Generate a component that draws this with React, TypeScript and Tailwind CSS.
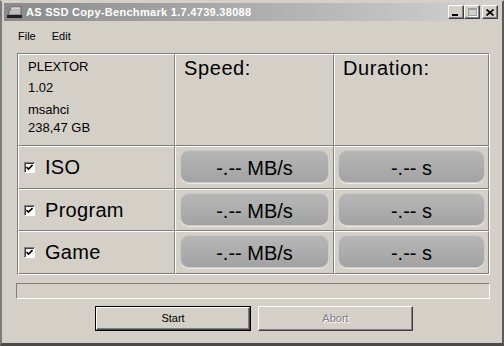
import React from 'react';

const ROWS = ['ISO', 'Program', 'Game'];

const Pill: React.FC<{ text: string }> = ({ text }) => (
    <div className="h-[33px] rounded-[9px] border border-[#c9c9c9] shadow-[0_1px_0_#ececec] bg-gradient-to-b from-[#b6b6b6] via-[#adadad] to-[#a2a2a2] flex items-center justify-center pt-[3px] text-[20px] leading-[23px] text-black">
        {text}
    </div>
);

const CheckBox: React.FC = () => (
    <div className="w-[11px] h-[11px] bg-white border-t border-l border-[#808080] border-r border-b border-r-white border-b-white shadow-[inset_1px_1px_0_#404040] flex items-center justify-center">
        <svg width="7" height="7" viewBox="0 0 7 7">
            <path d="M0.5 3 L2.5 5 L6.5 1" stroke="#000" strokeWidth="1.6" fill="none" />
        </svg>
    </div>
);

const TitleButton: React.FC<{ children: React.ReactNode; className?: string }> = ({ children, className }) => (
    <div className={`w-[16px] h-[14px] bg-[#d4d0c8] border border-t-white border-l-white border-r-[#404040] border-b-[#404040] shadow-[inset_-1px_-1px_0_#808080] flex items-center justify-center ${className ?? ''}`}>
        {children}
    </div>
);

export default function App() {
    return (
        <div
            className="w-[504px] h-[346px] bg-[#d4d0c8] border-l-2 border-t-2 border-r-2 border-b-[3px] border-l-[#7a7a7a] border-t-[#d4d0c8] border-r-[#5a5a5a] border-b-[#4a4a4a] flex flex-col overflow-hidden"
            style={{ fontFamily: '"Liberation Sans", Arial, sans-serif' }}
        >
            {/* Title bar */}
            <div className="mx-[2px] mt-[1px] h-[18px] bg-gradient-to-r from-[#8a8a8a] to-[#d2d2d2] flex items-center pl-[2px] pr-[2px]">
                <svg width="17" height="14" viewBox="0 0 17 14" className="mr-[3px]">
                    <path d="M2 10 L5 2 L15 2 L15 10 Z" fill="#bdbdbd" stroke="#6a6a6a" strokeWidth="1" />
                    <path d="M5 3 L14 3" stroke="#e8e8e8" strokeWidth="1" />
                    <rect x="1" y="10" width="15" height="3" fill="#202020" />
                </svg>
                <span className="text-[11px] font-bold text-white tracking-[0.3px] whitespace-nowrap">AS SSD Copy-Benchmark 1.7.4739.38088</span>
                <div className="ml-auto flex items-center">
                    <TitleButton>
                        <div className="w-[6px] h-[2px] bg-black mt-[6px] -ml-[2px]" />
                    </TitleButton>
                    <TitleButton>
                        <div className="w-[9px] h-[8px] border border-[#a0a0a0] border-t-2 shadow-[1px_1px_0_#fff]" />
                    </TitleButton>
                    <TitleButton className="ml-[2px]">
                        <svg width="8" height="7" viewBox="0 0 8 7">
                            <path d="M0.5 0.5 L7.5 6.5 M7.5 0.5 L0.5 6.5" stroke="#000" strokeWidth="1.7" />
                        </svg>
                    </TitleButton>
                </div>
            </div>

            {/* Menu bar */}
            <div className="h-[30px] flex items-center gap-[16px] pl-[16px] text-[11px] text-black">
                <span>File</span>
                <span>Edit</span>
            </div>

            {/* Table */}
            <div className="ml-[15px] mt-[2px] w-[473px] border border-t-[#808080] border-l-[#808080] border-r-white border-b-white grid grid-cols-[157px_159px_155px] grid-rows-[92px_43px_42px_43px]">
                <div className="border border-t-white border-l-white border-r-[#808080] border-b-[#808080] pl-[9px] pt-[4px] text-[13px] text-black leading-[15px]">
                    <div>PLEXTOR</div>
                    <div className="mt-[6px]">1.02</div>
                    <div className="mt-[7px]">msahci</div>
                    <div className="mt-[3px]">238,47 GB</div>
                </div>
                <div className="border border-t-white border-l-white border-r-[#808080] border-b-[#808080] pl-[8px] pt-[2px] text-[20px] leading-[23px] tracking-[0.6px] text-black">
                    Speed:
                </div>
                <div className="border border-t-white border-l-white border-r-[#808080] border-b-[#808080] pl-[8px] pt-[2px] text-[20px] leading-[23px] tracking-[0.6px] text-black">
                    Duration:
                </div>
                {ROWS.map((r) => (
                    <React.Fragment key={r}>
                        <div className="border border-t-white border-l-white border-r-[#808080] border-b-[#808080] flex items-center pl-[5px] gap-[10px] text-[20px] leading-[23px] text-black">
                            <CheckBox />
                            <span className="tracking-[0.3px]">{r}</span>
                        </div>
                        <div className="border border-t-white border-l-white border-r-[#808080] border-b-[#808080] px-[4px] pt-[3px]">
                            <Pill text="-.-- MB/s" />
                        </div>
                        <div className="border border-t-white border-l-white border-r-[#808080] border-b-[#808080] px-[3px] pt-[3px]">
                            <Pill text="-.-- s" />
                        </div>
                    </React.Fragment>
                ))}
            </div>

            {/* Progress bar */}
            <div className="ml-[14px] mt-[8px] w-[474px] h-[16px] border border-t-[#808080] border-l-[#808080] border-r-white border-b-white" />

            {/* Buttons */}
            <div className="mt-[7px] pl-[93px] flex gap-[7px] text-[11px]">
                <div className="w-[156px] h-[25px] border border-black bg-[#d4d0c8] flex">
                    <div className="flex-1 border border-t-white border-l-white border-r-[#404040] border-b-[#404040] shadow-[inset_-1px_-1px_0_#808080] flex items-center justify-center text-black">
                        Start
                    </div>
                </div>
                <div className="w-[155px] h-[25px] border border-t-white border-l-white border-r-[#404040] border-b-[#404040] shadow-[inset_-1px_-1px_0_#808080] bg-[#d4d0c8] flex items-center justify-center text-[#808080] [text-shadow:1px_1px_0_#fff]">
                    Abort
                </div>
            </div>
        </div>
    );
}
